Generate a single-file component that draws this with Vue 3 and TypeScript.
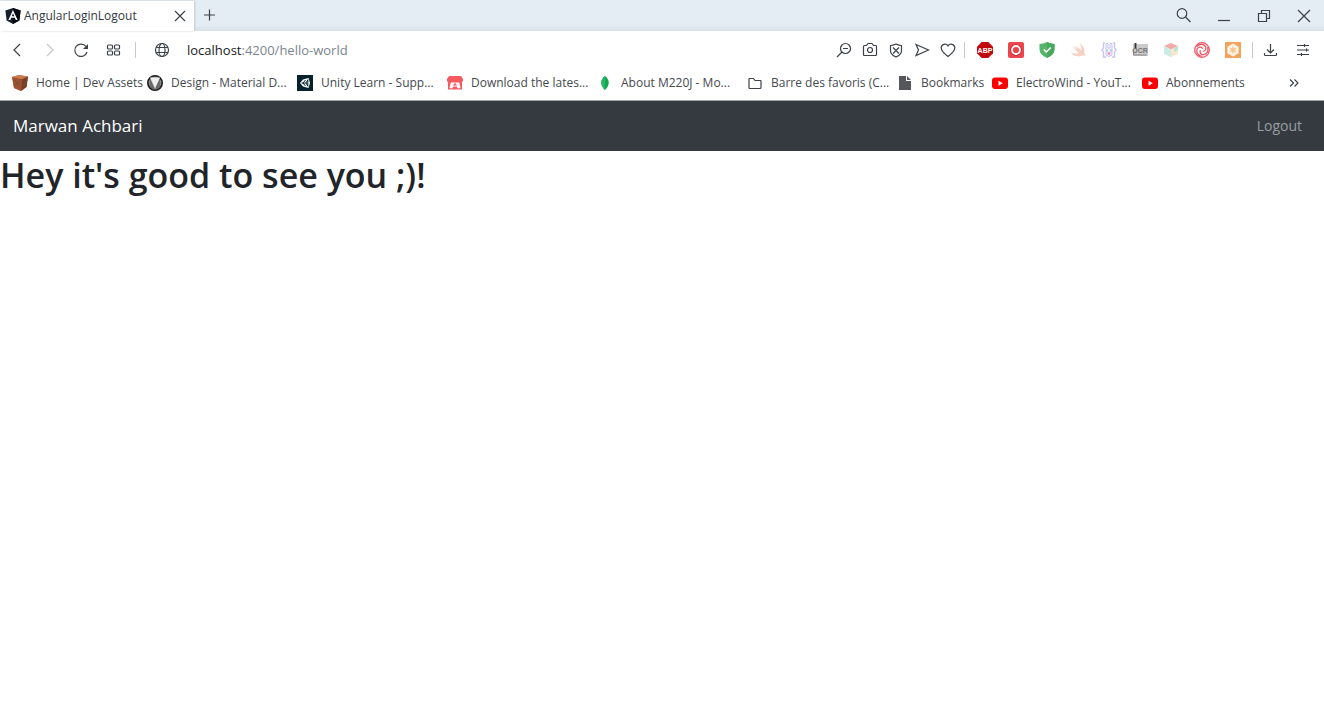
<script setup lang="ts">
interface Item {
  icon: string
  label: string
  size?: string
  text?: string
}

const bookmarks: Item[] = [
  { icon: 'crate', label: 'Home | Dev Assets', size: 'medium' },
  { icon: 'material', label: 'Design - Material D...' },
  { icon: 'unity', label: 'Unity Learn - Supp...' },
  { icon: 'itch', label: 'Download the lates...' },
  { icon: 'leaf', label: 'About M220J - Mo...' },
  { icon: 'folder', label: 'Barre des favoris (C...' },
  { icon: 'page', label: 'Bookmarks', size: 'small' },
  { icon: 'youtube', label: 'ElectroWind - YouT...' },
  { icon: 'youtube', label: 'Abonnements', size: 'small' },
]

const pageActions: Item[] = [
  { icon: 'zoom-out', label: 'Zoom' },
  { icon: 'camera', label: 'Snapshot' },
  { icon: 'shield-x', label: 'Blocker' },
  { icon: 'send', label: 'Send' },
  { icon: 'heart', label: 'Favourite' },
]

const extensions: Item[] = [
  { icon: 'abp', label: 'Adblock', text: 'ABP' },
  { icon: 'record', label: 'Recorder' },
  { icon: 'guard', label: 'Guard' },
  { icon: 'bird', label: 'Swift' },
  { icon: 'bunny', label: 'Json' },
  { icon: 'ocr', label: 'Reader', text: 'OCR' },
  { icon: 'cube', label: 'Cube' },
  { icon: 'swirl', label: 'Swirl' },
  { icon: 'hexagon', label: 'Hexagon' },
]
</script>

<template>
  <svg class="sprite" aria-hidden="true">
    <symbol id="angular" viewBox="0 0 16 16">
      <path d="M8 0l7.600 2.600-1.200 9.900L8 16l-6.400-3.500L.4 2.600z" fill="#17202a" />
      <path d="M8 0l7.600 2.600-1.200 9.900L8 16z" fill="#05090d" />
      <path d="M8 2L3.400 12h1.900l.9-2.200h3.600l.9 2.200h1.900zM8 5.200l1.200 3.100H6.800z" fill="#fff" fill-rule="evenodd" />
    </symbol>
    <symbol id="close" viewBox="0 0 16 16"><path d="M3 3l10 10M13 3L3 13" class="line" /></symbol>
    <symbol id="win-close" viewBox="0 0 16 16"><path d="M2 2l12 12M14 2L2 14" class="line" /></symbol>
    <symbol id="plus" viewBox="0 0 16 16"><path d="M7.500 1.500v11M2 7h11" class="line" /></symbol>
    <symbol id="search" viewBox="0 0 16 16"><circle cx="6" cy="5.500" r="4.800" class="line" /><path d="M9.500 9l5 5" class="line" /></symbol>
    <symbol id="minimize" viewBox="0 0 16 16"><path d="M2 12.500h12" class="line" /></symbol>
    <symbol id="restore" viewBox="0 0 16 16"><path d="M2.500 5.500h8v8h-8zM5.500 5.500v-3h8v8h-3" class="line" /></symbol>
    <symbol id="back" viewBox="0 0 16 16"><path d="M11 2L5 8l6 6" class="line" /></symbol>
    <symbol id="forward" viewBox="0 0 16 16"><path d="M6 2l6 6-6 6" class="line pale" /></symbol>
    <symbol id="reload" viewBox="0 0 16 16"><path d="M14 10A6.200 6.200 0 1 1 13 4.500L14 6" class="line" /><path d="M15 2v5h-5z" fill="#40454b" /></symbol>
    <symbol id="grid" viewBox="0 0 16 16">
      <rect x="2.500" y="3" width="5" height="4" rx="1" class="line" /><rect x="9.500" y="3" width="5" height="4" rx="1" class="line" />
      <rect x="2.500" y="9" width="5" height="4" rx="1" class="line" /><rect x="9.500" y="9" width="5" height="4" rx="1" class="line" />
    </symbol>
    <symbol id="globe" viewBox="0 0 16 16">
      <circle cx="8" cy="8" r="6.500" class="line" /><ellipse cx="8" cy="8" rx="3" ry="6.500" class="line" />
      <path d="M2 5.500h12M2 10.500h12" class="line" />
    </symbol>
    <symbol id="zoom-out" viewBox="0 0 16 16"><circle cx="9.500" cy="6.500" r="5" class="line" /><path d="M6 10l-5 5M7 6.500h5" class="line" /></symbol>
    <symbol id="camera" viewBox="0 0 16 16"><path d="M1.500 4.500q0-1 1-1h2l1.500-2h4l1.500 2h2q1 0 1 1v8q0 1-1 1h-11q-1 0-1-1z" class="line" /><circle cx="8" cy="8" r="2.500" class="line" /></symbol>
    <symbol id="shield-x" viewBox="0 0 16 16"><path d="M8 2q3 1.500 5.500 1.500v5.500q0 3.500-5.500 6-5.500-2.500-5.500-6V3.500Q5 3.500 8 2zM5 5.500l6 6M11 5.500l-6 6" class="line" /></symbol>
    <symbol id="send" viewBox="0 0 16 16"><path d="M2 2.500L14.500 8 2 13.500 4.500 8z" class="line" /></symbol>
    <symbol id="heart" viewBox="0 0 16 16"><path d="M8 14.500C4 11.500 1.200 9 1.200 5.800A3.700 3.700 0 0 1 8 3.900a3.700 3.700 0 0 1 6.800 1.900C14.800 9 12 11.500 8 14.500z" class="line" /></symbol>
    <symbol id="download" viewBox="0 0 16 16"><path d="M7.500 2v9M4 7.500L7.500 11 11 7.500M1.500 11v1.500q0 1 1 1h10q1 0 1-1V11" class="line" /></symbol>
    <symbol id="sliders" viewBox="0 0 16 16"><path d="M2 3.500h12M2 8h12M2 12.500h12M9.500 2v3M11.500 6.500v3M6.500 11v3" class="line" /></symbol>
    <symbol id="more" viewBox="0 0 16 16"><path d="M4 4.500L7.500 8 4 11.500M8.500 4.500L12 8l-3.500 3.500" class="line" /></symbol>

    <symbol id="abp" viewBox="0 0 16 16">
      <path d="M4.700 0h6.600L16 4.700v6.600L11.300 16H4.700L0 11.300V4.700z" fill="#c1090d" />
    </symbol>
    <symbol id="record" viewBox="0 0 16 16">
      <rect width="16" height="16" rx="2" fill="#ee444b" /><circle cx="8" cy="8" r="5.500" fill="#a32336" /><circle cx="8" cy="8" r="4" fill="#ee444b" stroke="#fff" stroke-width="1.800" />
    </symbol>
    <symbol id="guard" viewBox="0 0 16 16">
      <path d="M8 0q4 2 7.500 2v5q0 6-7.500 9Q.5 13 .5 7V2Q4 2 8 0z" fill="#55b56a" /><path d="M8 0q4 2 7.500 2v5q0 6-7.500 9z" fill="#48a95e" /><path d="M4.800 7.500l2.500 2.500 4.500-4.500" fill="none" stroke="#fff" stroke-width="1.500" />
    </symbol>
    <symbol id="bird" viewBox="0 0 16 16"><path d="M9.500 1c5 3.500 5.500 7 4.500 9.500 1.500 2 1.700 3 1.400 4-1.200-1.700-2.400-1.300-3.700-.7C7.500 15.500 3 13.500.5 10c3 1.700 6 2 8.300 1C6 8.500 3.500 5.500 2.300 3.800L8 8 4.500 3c2.500 2.300 5 4 7 5.400.5-2.400-.6-5-2-7.400z" fill="#f8cfc3" /></symbol>
    <symbol id="bunny" viewBox="0 0 16 16">
      <path d="M4 1H2.500v5L1 8l1.500 2v5H5M12 1h1.500v5L15 8l-1.500 2v5H11" fill="none" stroke="#cdc3f3" stroke-width="1.400" />
      <path d="M5 13V2q1-2 2 0v4h2V2q1-2 2 0v11q-3 3-6 0z" fill="#f3eefc" stroke="#c8c8f2" />
      <path d="M6 7.500v2M10 7.500v2" stroke="#93c6ee" stroke-width="1.300" /><path d="M6.200 10.500h3.600L8 13.500z" fill="#ef7fa8" />
    </symbol>
    <symbol id="ocr" viewBox="0 0 16 16">
      <rect x="1" y="2" width="15" height="12" fill="#cbcbcb" /><path d="M3.500 1v6" stroke="#333" stroke-width="1.800" /><path d="M1.500 8v5h13" fill="none" stroke="#888" />
    </symbol>
    <symbol id="cube" viewBox="0 0 16 16">
      <path d="M8 1l7 3-7 3.500L1 4z" fill="#f3aaa9" /><path d="M1 4l7 3.500V15l-7-3z" fill="#c9ece4" /><path d="M15 4L8 7.500V15l7-3z" fill="#f8e7ce" /><path d="M11 6l4-2v4l-4 2z" fill="#bde4d9" />
    </symbol>
    <symbol id="swirl" viewBox="0 0 16 16">
      <g fill="none" stroke="#ee5563" stroke-width="1.300">
        <circle cx="8" cy="8" r="7.300" />
        <path d="M2.500 4.500Q8 0 11.500 4.500Q13 8 9 9.500" />
        <path d="M2.500 4.500Q8 0 11.500 4.500Q13 8 9 9.500" transform="rotate(120 8 8)" />
        <path d="M2.500 4.500Q8 0 11.500 4.500Q13 8 9 9.500" transform="rotate(240 8 8)" />
      </g>
    </symbol>
    <symbol id="hexagon" viewBox="0 0 16 16">
      <rect width="16" height="16" fill="#f2a45c" /><path d="M8 1.500l5.600 3.200v6.600L8 14.500l-5.600-3.200V4.700z" fill="#fff5e8" /><path d="M8 4.500v7M5 6.200l6 3.600M11 6.200L5 9.800" stroke="#f5c48e" stroke-width="1.400" />
    </symbol>

    <symbol id="crate" viewBox="0 0 16 16">
      <path d="M0 2l7-2 9 1.500-1.500 10.500L9 16l-7-3z" fill="#b9653b" /><path d="M0 2l10 2-1 12-7-3z" fill="#a15233" /><path d="M10 4l6-2.500L14.500 12 9 16z" fill="#7c3c28" /><path d="M2 4l6 8M8 5l-5 6M11 11l4-6" stroke="#73513f" /><path d="M0 2l7-2 9 1.500L10 4z" fill="#cc7c50" />
    </symbol>
    <symbol id="material" viewBox="0 0 16 16">
      <circle cx="8" cy="8" r="7.200" fill="#8a8a8a" stroke="#1c1c1c" stroke-width="1.600" /><path d="M3 3v9l3 2.500L8 13l2 1.500 3-2.500V3L8 13z" fill="#6b6b6b" /><path d="M3 2.500h10L8 13.500z" fill="#efefef" />
    </symbol>
    <symbol id="unity" viewBox="0 0 16 16">
      <rect width="16" height="16" fill="#06222d" /><path d="M3 8l3-3.500 5.500-1.500L13 8l-1.500 5L6 11.500z" fill="#fff" /><path d="M4.500 8H9M9 8l2-3.500M9 8l2 3.500M6 8l2.500-3M6 8l2.500 3M10.800 5v6" stroke="#06222d" fill="none" />
    </symbol>
    <symbol id="itch" viewBox="0 0 16 16">
      <path d="M2 1h12l2 3v1.500q-.5 1.500-1 1.500v7.500H1V7Q0 6.500 0 5.500V4z" fill="#f45c5f" /><path d="M3.800 7.500h8.400l1.300 5.500-2.500.5-1.500-2h-3l-1.500 2-2.500-.5z" fill="#fff" /><path d="M8 7.800l2.300 2.700H5.700z" fill="#f45c5f" />
    </symbol>
    <symbol id="leaf" viewBox="0 0 16 16"><path d="M8 1c5 4 5 9 0 14C3 10 3 5 8 1z" fill="#12a650" /><path d="M8 1v14C3 10 3 5 8 1z" fill="#25b765" /></symbol>
    <symbol id="folder" viewBox="0 0 16 16"><path d="M2.500 3.500h4l1.500 2h5.500q.5 0 .5.500v6.500q0 1-1 1H3q-1 0-1-1V4q0-.5.500-.5z" class="line" /></symbol>
    <symbol id="page" viewBox="0 0 16 16"><path d="M2 1h7v5h5v9H2zM10 1l4 4h-4z" fill="#55565a" /></symbol>
    <symbol id="youtube" viewBox="0 0 16 16"><rect y="2.500" width="16" height="11.500" rx="3" fill="#f00" /><path d="M6.500 5.700v5L10.800 8.200z" fill="#fff" /></symbol>
  </svg>

  <div class="browser">
    <header>
      <div class="tabs">
        <div class="tab">
          <svg class="icon"><use href="#angular" /></svg>
          <span class="tab-title">AngularLoginLogout</span>
          <button aria-label="Close tab"><svg class="icon"><use href="#close" /></svg></button>
        </div>
        <button class="new-tab" aria-label="New tab"><svg class="icon"><use href="#plus" /></svg></button>
        <div class="window-controls">
          <button aria-label="Search tabs"><svg class="icon"><use href="#search" /></svg></button>
          <button aria-label="Minimize"><svg class="icon"><use href="#minimize" /></svg></button>
          <button aria-label="Restore"><svg class="icon"><use href="#restore" /></svg></button>
          <button aria-label="Close window"><svg class="icon"><use href="#win-close" /></svg></button>
        </div>
      </div>

      <div class="toolbar">
        <div class="navigation">
          <button aria-label="Back"><svg class="icon"><use href="#back" /></svg></button>
          <button aria-label="Forward" disabled><svg class="icon"><use href="#forward" /></svg></button>
          <button aria-label="Reload"><svg class="icon"><use href="#reload" /></svg></button>
          <button aria-label="Speed dial"><svg class="icon"><use href="#grid" /></svg></button>
        </div>
        <span class="divider"></span>
        <button class="site" aria-label="Site information"><svg class="icon"><use href="#globe" /></svg></button>
        <a class="address" href="#hello-world"><span class="host">localhost</span>:4200/hello-world</a>
        <div class="page-actions">
          <button v-for="action in pageActions" :key="action.icon" :aria-label="action.label">
            <svg class="icon"><use :href="'#' + action.icon" /></svg>
          </button>
        </div>
        <span class="divider"></span>
        <div class="extensions">
          <button v-for="ext in extensions" :key="ext.icon" :aria-label="ext.label">
            <svg class="icon" viewBox="0 0 16 16">
              <use :href="'#' + ext.icon" />
              <text v-if="ext.text" class="glyph" :class="ext.icon" x="8" y="11" text-anchor="middle">{{ ext.text }}</text>
            </svg>
          </button>
        </div>
        <span class="divider"></span>
        <div class="menu">
          <button aria-label="Downloads"><svg class="icon"><use href="#download" /></svg></button>
          <button aria-label="Easy setup"><svg class="icon"><use href="#sliders" /></svg></button>
        </div>
      </div>

      <nav class="bookmarks" aria-label="Bookmarks">
        <a v-for="mark in bookmarks" :key="mark.label" href="#" class="bookmark" :class="mark.size">
          <svg class="icon"><use :href="'#' + mark.icon" /></svg>
          <span>{{ mark.label }}</span>
        </a>
        <button class="more" aria-label="More bookmarks"><svg class="icon"><use href="#more" /></svg></button>
      </nav>
    </header>

    <nav class="navbar" aria-label="Main">
      <a class="brand" href="#">Marwan Achbari</a>
      <a class="logout" href="#">Logout</a>
    </nav>
    <main>
      <h1>Hey it's good to see you ;)!</h1>
    </main>
  </div>
</template>

<style>
body {
  background: #fff;
}
</style>

<style scoped>
.sprite {
  position: absolute;
  width: 0;
  height: 0;
}

.line {
  fill: none;
  stroke: #3c4248;
  stroke-width: 1.2;
}

.pale {
  stroke: #c3c6c9;
}

.browser {
  min-height: 100vh;
  background: #fff;
  font-family: "Open Sans", "Noto Sans", sans-serif;
}

.icon {
  display: block;
  flex: none;
  width: 16px;
  height: 16px;
}

.glyph {
  font-family: "Liberation Sans", sans-serif;
  font-size: 7px;
  font-weight: 700;
}

.glyph.abp {
  fill: #fff;
}

.glyph.ocr {
  fill: #777;
}

button {
  display: block;
  flex: none;
  padding: 0;
  border: 0;
  background: none;
}

a {
  color: inherit;
  text-decoration: none;
  white-space: nowrap;
}

.tabs {
  display: flex;
  align-items: center;
  height: 31px;
  background: linear-gradient(#e4ecf4 80%, #d8e0e8);
}

.tab {
  display: flex;
  align-items: center;
  box-sizing: border-box;
  width: 194px;
  height: 30px;
  align-self: flex-end;
  padding: 0 6px 0 5px;
  background: #fff;
  box-shadow: 1px 0 2px #c5ccd4;
}

.tab-title {
  flex: 1;
  padding-left: 3px;
  color: #33383e;
  font-size: 12px;
  line-height: 16px;
}

.new-tab {
  margin-left: 8px;
}

.window-controls {
  display: flex;
  gap: 24px;
  margin-left: auto;
  padding-right: 12px;
}

.toolbar {
  display: flex;
  align-items: center;
  height: 38px;
  padding: 0 13px 0 9px;
}

.navigation {
  display: flex;
  gap: 16px;
  margin-right: 14px;
}

.divider {
  flex: none;
  width: 1px;
  height: 16px;
  background: #c6c9cc;
}

.site {
  margin-left: 18px;
}

.address {
  flex: 1;
  padding-left: 17px;
  color: #7a858e;
  font-size: 13px;
  line-height: 20px;
}

.host {
  color: #17191c;
}

.page-actions {
  display: flex;
  gap: 10px;
  margin-right: 8px;
}

.extensions {
  display: flex;
  gap: 15px;
  margin: 0 11px 0 12px;
}

.menu {
  display: flex;
  gap: 16px;
  margin-left: 10px;
}

.bookmarks {
  display: flex;
  align-items: center;
  height: 28px;
  padding: 0 22px 3px 12px;
  color: #45494e;
  font-size: 12px;
  line-height: 16px;
}

.bookmark {
  display: flex;
  flex: none;
  align-items: center;
  gap: 8px;
  width: 150px;
}

.medium {
  width: 135px;
}

.small {
  width: 95px;
}

.more {
  margin-left: auto;
}

.navbar {
  display: flex;
  align-items: center;
  justify-content: space-between;
  height: 50px;
  padding: 0 22px 0 13px;
  border-top: 1px solid #9fa5aa;
  background: #343a40;
}

.brand {
  color: #fff;
  font-size: 17px;
  line-height: 28px;
}

.logout {
  color: #999da0;
  font-size: 14px;
  line-height: 20px;
}

h1 {
  margin: 0;
  padding-top: 2px;
  color: #212529;
  font-size: 34px;
  font-weight: 600;
  line-height: 44px;
}
</style>
